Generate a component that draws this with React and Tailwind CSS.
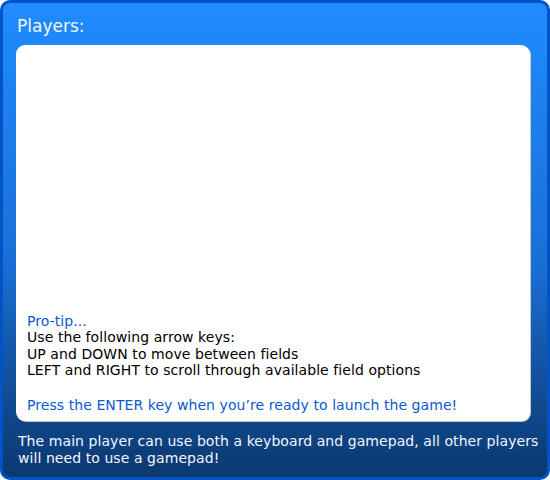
export default function App() {
  return (
    <div className="w-[550px] h-[480px] bg-white" style={{ fontFamily: '"DejaVu Sans", Verdana, sans-serif' }}>
      <div className="w-full h-full rounded-[10px] border-[3px] border-[#0054c6] bg-linear-to-b from-[#1f8cff] via-[#1a6fd6] via-55% to-[#0b386e] flex flex-col">
        {/* Title */}
        <div className="px-[14px] pt-[12px] h-[42px] text-[17px] leading-[22px] text-[#f2f6ff]">Players:</div>

        {/* Panel */}
        <div className="ml-[13px] mr-[17px] h-[376px] bg-white rounded-[9px] shadow-[1px_1px_0_#c8c8c8] flex flex-col justify-end px-[11px] pb-[8px] text-[14px] leading-[16.5px] tracking-[0.07px]">
          <div className="text-[#0a5ad0]">Pro-tip...</div>
          <div className="text-black">Use the following arrow keys:</div>
          <div className="text-black">UP and DOWN to move between fields</div>
          <div className="text-black">LEFT and RIGHT to scroll through available field options</div>
          <div className="h-[18px]" />
          <div className="text-[#0a5ad0]">Press the ENTER key when you’re ready to launch the game!</div>
        </div>

        {/* Footer */}
        <div className="pl-[15px] pr-[6px] pt-[12px] text-[14px] leading-[17px] tracking-[0.07px] text-[#f2f6ff]">
          The main player can use both a keyboard and gamepad, all other players will need to use a gamepad!
        </div>
      </div>
    </div>
  );
}
